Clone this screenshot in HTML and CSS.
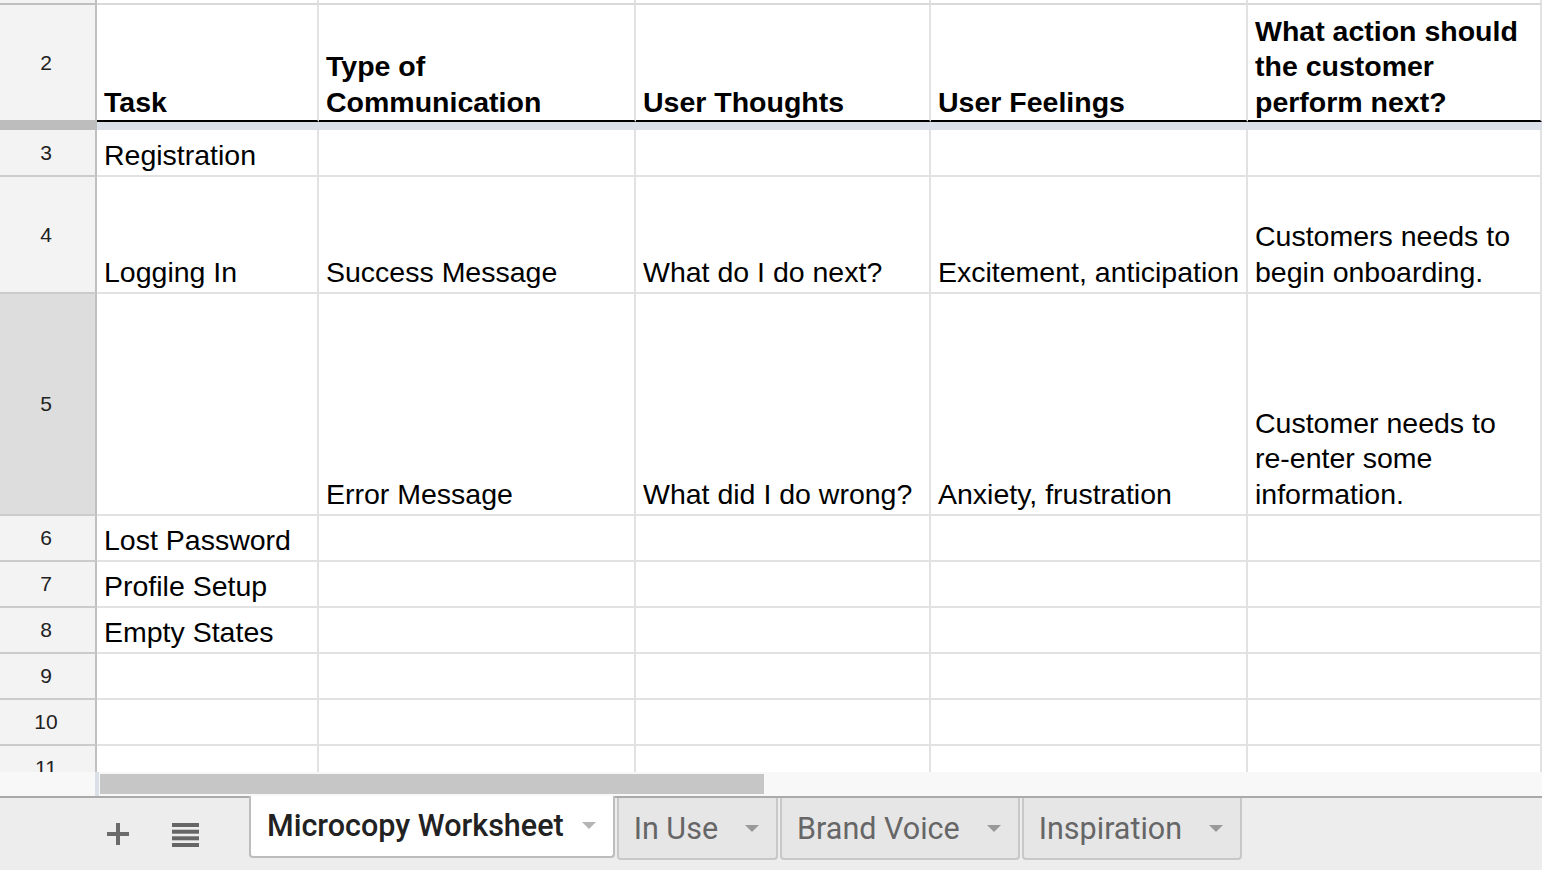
FILE: index.html
```html
<!DOCTYPE html>
<html lang="en">
<head>
  <meta charset="UTF-8" />
  <title>Microcopy Worksheet</title>
  <link rel="stylesheet" href="styles.css">
</head>
<body>

<div class="sheet">
  <!-- row 1 (scrolled off) -->
  <div class="rh top"></div>
  <div class="c top"></div><div class="c top"></div><div class="c top"></div><div class="c top"></div><div class="c top"></div>

  <!-- row 2: header -->
  <div class="rh hdr">2</div>
  <div class="c hd">Task</div>
  <div class="c hd">Type of<br>Communication</div>
  <div class="c hd">User Thoughts</div>
  <div class="c hd">User Feelings</div>
  <div class="c hd">What action should<br>the customer<br>perform next?</div>

  <!-- frozen divider -->
  <div class="freeze-rh"></div>
  <div class="freeze"></div>

  <div class="rh">3</div>
  <div class="c">Registration</div>
  <div class="c"></div><div class="c"></div><div class="c"></div><div class="c"></div>

  <div class="rh">4</div>
  <div class="c">Logging In</div>
  <div class="c">Success Message</div>
  <div class="c">What do I do next?</div>
  <div class="c">Excitement, anticipation</div>
  <div class="c">Customers needs to<br>begin onboarding.</div>

  <div class="rh sel">5</div>
  <div class="c"></div>
  <div class="c">Error Message</div>
  <div class="c">What did I do wrong?</div>
  <div class="c">Anxiety, frustration</div>
  <div class="c">Customer needs to<br>re-enter some<br>information.</div>

  <div class="rh">6</div>
  <div class="c">Lost Password</div>
  <div class="c"></div><div class="c"></div><div class="c"></div><div class="c"></div>

  <div class="rh">7</div>
  <div class="c">Profile Setup</div>
  <div class="c"></div><div class="c"></div><div class="c"></div><div class="c"></div>

  <div class="rh">8</div>
  <div class="c">Empty States</div>
  <div class="c"></div><div class="c"></div><div class="c"></div><div class="c"></div>

  <div class="rh">9</div>
  <div class="c"></div><div class="c"></div><div class="c"></div><div class="c"></div><div class="c"></div>

  <div class="rh">10</div>
  <div class="c"></div><div class="c"></div><div class="c"></div><div class="c"></div><div class="c"></div>

  <div class="rh">11</div>
  <div class="c"></div><div class="c"></div><div class="c"></div><div class="c"></div><div class="c"></div>
</div>

<div class="hscroll">
  <div class="corner"></div>
  <div class="thumb"></div>
</div>

<div class="tabbar">
  <div class="tools">
    <svg class="plus" width="22" height="22" viewBox="0 0 22 22">
      <rect x="9" y="0" width="4" height="22" fill="#6b6b6b"/>
      <rect x="0" y="9" width="22" height="4" fill="#6b6b6b"/>
    </svg>
    <svg class="menu" width="27" height="24" viewBox="0 0 27 24">
      <rect x="0" y="0" width="27" height="4" fill="#666"/>
      <rect x="0" y="6.7" width="27" height="4" fill="#666"/>
      <rect x="0" y="13.3" width="27" height="4" fill="#666"/>
      <rect x="0" y="20" width="27" height="4" fill="#666"/>
    </svg>
  </div>
  <div class="tab active">Microcopy Worksheet<span class="caret"></span></div>
  <div class="tab">In Use<span class="caret"></span></div>
  <div class="tab">Brand Voice<span class="caret"></span></div>
  <div class="tab">Inspiration<span class="caret"></span></div>
</div>

</body>
</html>
```

FILE: styles.css
```css
html, body {
  margin: 0;
  padding: 0;
  width: 1542px;
  height: 870px;
  overflow: hidden;
  background: #fff;
}

.sheet {
  display: grid;
  grid-template-columns: 97px 222px 317px 295px 317px 1fr;
  grid-template-rows: 5px 117px 8px 47px 117px 222px 46px 46px 46px 46px 46px 46px;
  height: 772px;
  overflow: hidden;
  font-family: "Liberation Sans", Arial, sans-serif;
}

.c {
  box-sizing: border-box;
  border-right: 2px solid #e2e2e2;
  border-bottom: 2px solid #e2e2e2;
  padding: 0 4px 2px 7px;
  display: flex;
  flex-direction: column;
  justify-content: flex-end;
  font-size: 28.5px;
  line-height: 35.5px;
  color: #000;
  white-space: nowrap;
  overflow: hidden;
}

.c.top {
  border-bottom-color: #d9d9d9;
}

.c.hd {
  font-weight: bold;
  border-bottom-color: #000;
  padding-bottom: 0;
}

.rh {
  box-sizing: border-box;
  background: #f3f3f3;
  border-right: 2px solid #c0c0c0;
  border-bottom: 2px solid #cbcbcb;
  display: flex;
  align-items: center;
  justify-content: center;
  font-size: 21px;
  color: #222;
  padding-right: 3px;
}

.rh.top {
  border-bottom-color: #c0c0c0;
}

.rh.hdr {
  border-bottom-color: #bdbdbd;
}

.rh.sel {
  background: #dddddd;
}

.freeze-rh {
  background: #bdbdbd;
}

.freeze {
  grid-column: 2 / -1;
  background: #dadfe8;
}

.hscroll {
  display: flex;
  height: 24px;
  background: #f8f8f8;
}

.corner {
  width: 95px;
  border-right: 4px solid #dadfe8;
}

.thumb {
  width: 664px;
  margin: 2px 0 2px 1px;
  background: #c6c6c6;
}

.tabbar {
  box-sizing: border-box;
  height: 74px;
  border-top: 2px solid #aaaaaa;
  background: #ededed;
  display: flex;
  align-items: flex-start;
  font-family: Roboto, "Liberation Sans", sans-serif;
}

.tools {
  width: 249px;
  flex: none;
  display: flex;
  align-items: flex-start;
  padding-top: 25px;
}

.plus {
  margin-left: 107px;
}

.menu {
  margin-left: 43px;
}

.tab {
  box-sizing: border-box;
  height: 62px;
  display: flex;
  align-items: center;
  margin-left: 2px;
  padding: 0 17px 0 15px;
  background: #e6e6e6;
  border: 2px solid #c8c8c8;
  border-top: 0;
  border-radius: 0 0 4px 4px;
  font-size: 30.5px;
  color: #666;
  white-space: nowrap;
}

.tab.active {
  margin-left: 0;
  margin-top: -2px;
  padding: 0 17px 2px 16px;
  background: #fff;
  border-color: #bdbdbd;
  color: #222;
  font-weight: 500;
}

.caret {
  width: 0;
  height: 0;
  margin-left: 27px;
  border-left: 7px solid transparent;
  border-right: 7px solid transparent;
  border-top: 7px solid #999;
}

.tab.active .caret {
  margin-left: 18px;
  border-top-color: #b5b5b5;
}
```
